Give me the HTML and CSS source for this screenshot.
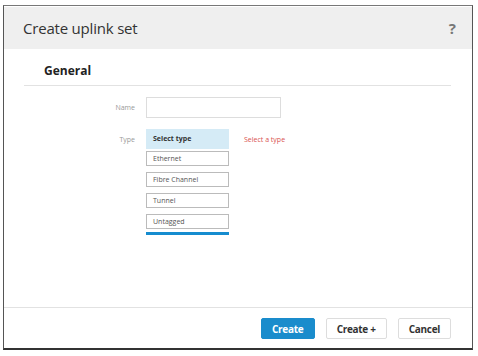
FILE: index.html
```html
<!DOCTYPE html>
<html lang="en">

<head>
    <meta charset="UTF-8">
    <meta name="viewport" content="width=device-width, initial-scale=1.0">
    <title>Create uplink set</title>
    <link rel="stylesheet" href="styles.css">
</head>

<body>
    <div class="dialog">
        <div class="dialog-header">
            <h1>Create uplink set</h1>
            <span class="help">?</span>
        </div>

        <div class="dialog-body">
            <h2>General</h2>

            <div class="form-row">
                <label for="name">Name</label>
                <input type="text" id="name">
            </div>

            <div class="form-row type-row">
                <label>Type</label>
                <div class="type-list">
                    <div class="type-selected">Select type</div>
                    <div class="type-option">Ethernet</div>
                    <div class="type-option">Fibre Channel</div>
                    <div class="type-option">Tunnel</div>
                    <div class="type-option">Untagged</div>
                    <div class="type-bar"></div>
                </div>
                <span class="hint">Select a type</span>
            </div>
        </div>

        <div class="dialog-footer">
            <button class="primary">Create</button>
            <button>Create +</button>
            <button>Cancel</button>
        </div>
    </div>
</body>

</html>
```
FILE: styles.css
```css
body {
    margin: 0;
    padding: 5px 5px 5px 3px;
    background-color: white;
    font-family: "Open Sans", "Liberation Sans", sans-serif;
}

.dialog {
    height: 342px;
    border: 1px solid #555;
    border-bottom: 2px solid #333;
    border-top-color: #777;
    display: flex;
    flex-direction: column;
    background-color: white;
}

.dialog-header {
    display: flex;
    align-items: center;
    justify-content: space-between;
    height: 42px;
    margin-top: 1px;
    padding: 0 16px 0 19px;
    background-color: #efefef;
}

h1 {
    margin: 0;
    font-size: 15px;
    font-weight: normal;
    color: #333;
    letter-spacing: -0.2px;
}

.help {
    font-size: 15px;
    font-weight: bold;
    color: #777;
}

.dialog-body {
    flex: 1;
    padding: 13px 21px 0 20px;
}

h2 {
    margin: 0;
    padding: 0 0 6px 20px;
    font-size: 12px;
    font-weight: bold;
    color: #222;
    border-bottom: 1px solid #e2e2e2;
}

.form-row {
    display: flex;
    align-items: center;
    margin-top: 11px;
}

label {
    width: 111px;
    padding-right: 11px;
    text-align: right;
    font-size: 7px;
    color: #999;
}

input {
    width: 135px;
    height: 21px;
    margin: 0;
    padding: 0 4px;
    border: 1px solid #ddd;
    box-sizing: border-box;
}

.type-row {
    align-items: flex-start;
    margin-top: 11px;
}

.type-row label {
    margin-top: 6px;
}

.type-list {
    width: 83px;
    display: flex;
    flex-direction: column;
    gap: 6px;
}

.type-selected {
    height: 20px;
    line-height: 20px;
    padding-left: 7px;
    background-color: #d5ebf6;
    font-size: 7px;
    font-weight: bold;
    color: #333;
}

.type-option {
    height: 15px;
    line-height: 14px;
    padding-left: 6px;
    border: 1px solid #bbb;
    box-sizing: border-box;
    font-size: 7px;
    color: #555;
}

.type-selected + .type-option {
    margin-top: -4px;
}

.type-bar {
    height: 3px;
    margin-top: -3px;
    background-color: #168ccf;
}

.hint {
    margin: 6px 0 0 15px;
    font-size: 7px;
    color: #d9534f;
}

.dialog-footer {
    display: flex;
    justify-content: flex-end;
    gap: 11px;
    height: 41px;
    padding: 10px 21px 0 0;
    box-sizing: border-box;
    border-top: 1px solid #e2e2e2;
}

button {
    height: 21px;
    padding: 0 10px;
    border: 1px solid #ddd;
    border-radius: 2px;
    background-color: white;
    font-family: "Open Sans", "Liberation Sans", sans-serif;
    font-size: 10px;
    font-weight: bold;
    letter-spacing: -0.3px;
    color: #333;
    cursor: pointer;
}

button.primary {
    width: 54px;
    background-color: #1a8ccc;
    border-color: #1a8ccc;
    color: white;
}
```
